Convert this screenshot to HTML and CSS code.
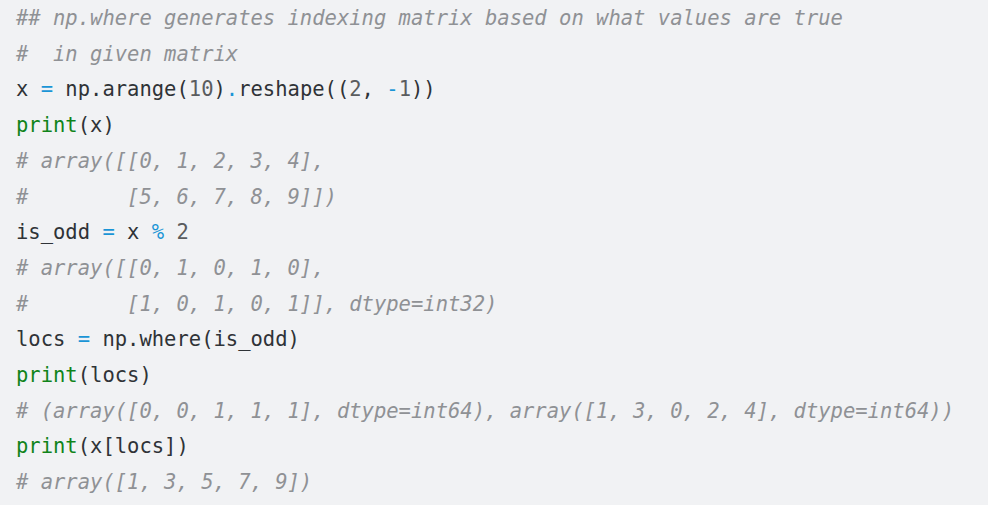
FILE: index.html
```html
<!DOCTYPE html>
<html>
<head>
<meta charset="utf-8">
<link rel="stylesheet" href="styles.css">
</head>
<body>
<pre class="code"><code><span class="c">## np.where generates indexing matrix based on what values are true</span>
<span class="c">#  in given matrix</span>
x <span class="o">=</span> np.arange(<span class="n">10</span>)<span class="o">.</span>reshape((<span class="n">2</span>, <span class="o">-</span><span class="n">1</span>))
<span class="b">print</span>(x)
<span class="c"># array([[0, 1, 2, 3, 4],</span>
<span class="c">#        [5, 6, 7, 8, 9]])</span>
is_odd <span class="o">=</span> x <span class="o">%</span> <span class="n">2</span>
<span class="c"># array([[0, 1, 0, 1, 0],</span>
<span class="c">#        [1, 0, 1, 0, 1]], dtype=int32)</span>
locs <span class="o">=</span> np.where(is_odd)
<span class="b">print</span>(locs)
<span class="c"># (array([0, 0, 1, 1, 1], dtype=int64), array([1, 3, 0, 2, 4], dtype=int64))</span>
<span class="b">print</span>(x[locs])
<span class="c"># array([1, 3, 5, 7, 9])</span></code></pre>
</body>
</html>
```
FILE: styles.css
```css
html, body {
  margin: 0;
  padding: 0;
  background: #f1f2f4;
}
.code {
  margin: 0;
  padding: 1px 16px 0;
  font-family: "DejaVu Sans Mono", "Liberation Mono", monospace;
  font-size: 20.5px;
  line-height: 35.7px;
  color: #2f3337;
  background: #f1f2f4;
}
.c {
  color: #8f9195;
  font-style: italic;
}
.o {
  color: #1a95d6;
}
.n {
  color: #5a5c5e;
}
.b {
  color: #10841a;
}
```
